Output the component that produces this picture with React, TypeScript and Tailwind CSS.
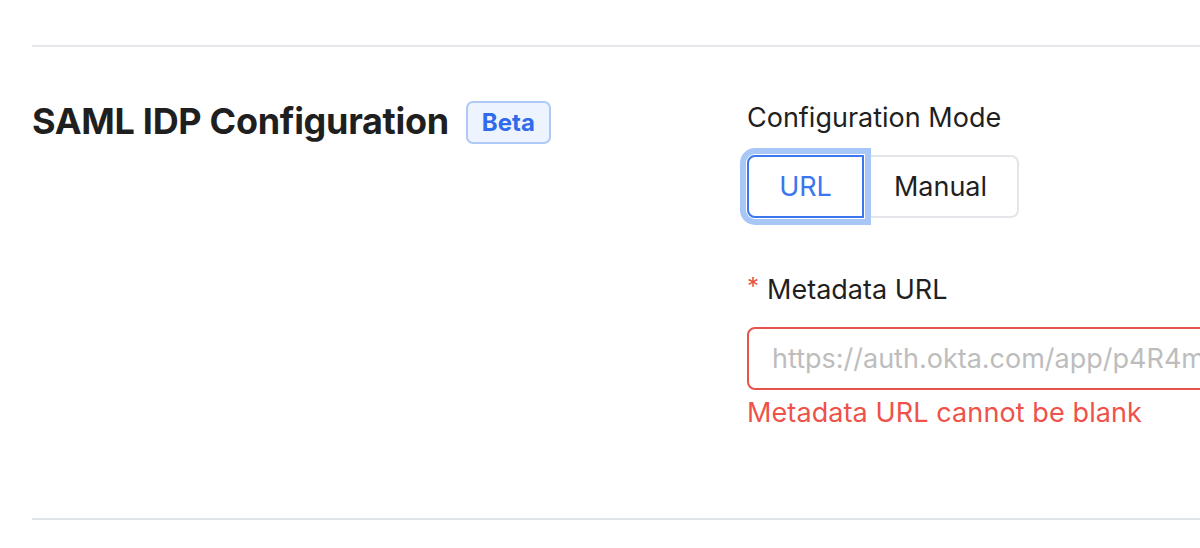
import { useState } from "react";

export default function App() {
  const [mode, setMode] = useState<"url" | "manual">("url");

  return (
    <div className="w-[1200px] h-[548px] overflow-hidden bg-white pl-8 pt-[45px] font-['Inter','Liberation_Sans',sans-serif] text-[#1f1f1f]">
      <div className="w-[1400px] border-t-2 border-b-2 border-t-[#e5e7eb] border-b-[#e0e4e8] flex pt-[55px] pb-[89px]">
        {/* Left column */}
        <div className="w-[715px] shrink-0 flex items-start">
          <div className="flex items-center gap-[17px] -mt-[5px]">
            <h2 className="text-[36px] leading-[44px] font-bold tracking-[-0.3px]">
              SAML IDP Configuration
            </h2>
            <span className="mt-[4px] h-[43px] px-[14px] flex items-center rounded-[7px] border-2 border-[#afc9f6] bg-[#eef4ff] text-[#2f6bea] text-[24px] font-bold">
              Beta
            </span>
          </div>
        </div>

        {/* Right column */}
        <div className="flex flex-col">
          <label className="text-[27px] leading-[32px]">Configuration Mode</label>

          <div className="flex mt-[21px]">
            <button
              onClick={() => setMode("url")}
              className={
                mode === "url"
                  ? "w-[117px] h-[63px] pt-[2px] rounded-l-[8px] border-2 border-[#3b76ef] text-[#3b76ef] text-[27px] shadow-[0_0_0_1px_#ffffff,0_0_0_7px_#a8c7f6] relative z-10"
                  : "w-[117px] h-[63px] pt-[2px] rounded-l-[8px] border-2 border-[#e3e5e8] text-[27px]"
              }
            >
              URL
            </button>
            <button
              onClick={() => setMode("manual")}
              className={
                mode === "manual"
                  ? "w-[155px] h-[63px] pt-[2px] rounded-r-[8px] border-2 border-[#3b76ef] text-[#3b76ef] text-[27px] shadow-[0_0_0_1px_#ffffff,0_0_0_7px_#a8c7f6] relative z-10"
                  : "w-[155px] h-[63px] pt-[2px] rounded-r-[8px] border-2 border-l-0 border-[#e3e5e8] text-[27px]"
              }
            >
              Manual
            </button>
          </div>

          <label className="mt-[56px] text-[27px] leading-[32px] flex items-center">
            <span className="text-[#e5534b] text-[24px] mr-[8px] -mt-[6px]">*</span>
            Metadata URL
          </label>

          <input
            type="text"
            placeholder="https://auth.okta.com/app/p4R4m7yzAbCdEfGh/sso/saml/metadata"
            className="mt-[21px] w-[640px] h-[63px] rounded-[8px] border-2 border-[#e5534b] px-[23px] text-[27px] placeholder:text-[#bdbdbd] outline-none"
          />
          <p className="mt-[7px] text-[27px] leading-[32px] text-[#ee524a] tracking-[0.1px]">
            Metadata URL cannot be blank
          </p>
        </div>
      </div>
    </div>
  );
}
